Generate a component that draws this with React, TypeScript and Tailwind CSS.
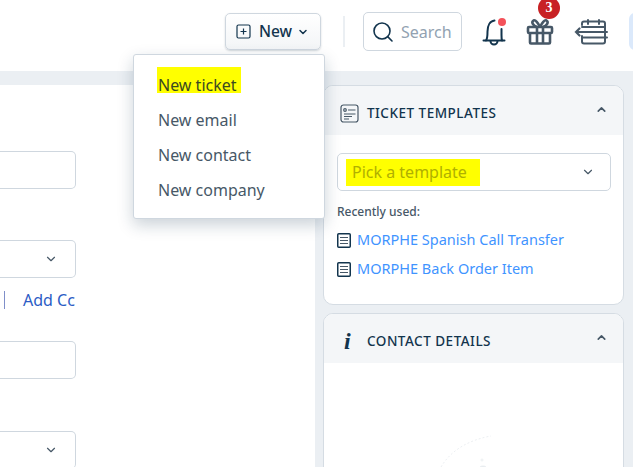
import { ChevronDown, ChevronUp, Search } from 'lucide-react';

const font = { fontFamily: '"Noto Sans", sans-serif' };

function GiftIcon() {
  return (
    <svg width="28" height="28" viewBox="0 0 28 28" fill="none" stroke="#475867" strokeWidth="2.6" strokeLinejoin="round">
      <rect x="2" y="9" width="24" height="6" rx="1" />
      <path d="M4 15v9.500a1 1 0 0 0 1 1h18a1 1 0 0 0 1-1V15" />
      <path d="M11 9v16.500M17 9v16.500" />
      <path d="M14 9C12 5 9.500 1.500 7.500 2.500 5 4 7 8 11 9M14 9c2-4 4.500-7.500 6.500-6.500C23 4 21 8 17 9" />
    </svg>
  );
}

function BellIcon() {
  return (
    <svg width="26" height="28" viewBox="0 0 26 28" fill="none" stroke="#12344d" strokeWidth="2" strokeLinecap="round">
      <path d="M2.500 22.500h21" />
      <path d="M5 22.500c1.500-2 1.500-4 1.500-9 0-6 2.500-10.500 7-11" />
      <path d="M20.500 11v6c0 2.500 0 4 .5 5.500" />
      <path d="M9.500 23a3.500 3.500 0 0 0 7 0" />
    </svg>
  );
}

function CalendarIcon() {
  return (
    <svg width="34" height="26" viewBox="0 0 34 26" fill="none" stroke="#475867" strokeWidth="2" strokeLinecap="round">
      <path d="M8 6V4.500a2 2 0 0 1 2-2h19a2 2 0 0 1 2 2v18a2 2 0 0 1-2 2H10a2 2 0 0 1-2-2V17" />
      <path d="M14 1v4M25 1v4M8 8h23" />
      <path d="M2 13h12M5.500 9.500 2 13l3.500 3.500" strokeWidth="2.200" />
      <path d="M14 13h19M8 18.500h25" />
    </svg>
  );
}

function TemplateIcon() {
  return (
    <svg width="19" height="19" viewBox="0 0 19 19" fill="none" stroke="#475867" strokeWidth="1.200">
      <rect x="1" y="1" width="17" height="17" rx="2.500" />
      <circle cx="5" cy="6" r="1.300" />
      <path d="M8 6h7.500M4 10h11.500M4 12.500h8M4 15h5" />
    </svg>
  );
}

function DocIcon() {
  return (
    <svg width="14" height="15" viewBox="0 0 14 15" fill="none" stroke="#12344d" className="shrink-0">
      <rect x="0.750" y="0.750" width="12.500" height="13.500" rx="1" strokeWidth="1.500" />
      <path d="M3 4.500h8M3 7.500h8M3 10.500h8" stroke="#475867" strokeWidth="1" />
    </svg>
  );
}

function FieldBox({ select }: { select?: boolean }) {
  return (
    <div className="flex h-[38px] w-[76px] items-center justify-end rounded-r-[5px] border border-l-0 border-[#cfd7df] bg-white pr-[17px]">
      {select && <ChevronDown size={14} className="text-[#475867]" />}
    </div>
  );
}

export default function App() {
  return (
    <div className="relative flex h-[467px] w-[633px] flex-col overflow-hidden bg-[#ebeff3] text-[#12344d]" style={font}>
      {/* Top bar */}
      <header className="flex h-[71px] shrink-0 items-center overflow-hidden bg-white pb-[8px] pl-[225px]">
        <button className="flex h-[37px] w-[96px] shrink-0 items-center rounded-[5px] border border-[#cfd7df] bg-gradient-to-b from-white to-[#f3f5f7] pl-[10px] shadow-[0_1px_2px_rgba(24,50,71,0.2)]">
          <svg width="15" height="15" viewBox="0 0 15 15" fill="none" stroke="#12344d" strokeWidth="1.200">
            <rect x="1" y="1" width="13" height="13" rx="1.500" />
            <path d="M7.500 4.500v6M4.500 7.500h6" />
          </svg>
          <span className="ml-[8px] text-[15.500px] font-medium">New</span>
          <ChevronDown size={12} strokeWidth={3} className="ml-[5px]" />
        </button>
        <div className="ml-[22px] h-[31px] w-[2px] shrink-0 bg-[#ebeff3]" />
        <div className="ml-[18px] flex h-[39px] w-[99px] shrink-0 items-center rounded-[5px] border border-[#cfd7df] bg-white pl-[7px]">
          <Search size={24} strokeWidth={1.600} className="shrink-0 text-[#12344d]" />
          <span className="ml-[6px] text-[16px] text-[#92a2b1]">Search</span>
        </div>
        <div className="relative ml-[19px] shrink-0">
          <BellIcon />
          <span className="absolute right-[1px] top-0 h-[8px] w-[8px] rounded-full bg-[#f4525a]" />
        </div>
        <div className="relative ml-[19px] shrink-0">
          <GiftIcon />
          <span className="absolute left-[12px] top-[-21px] flex h-[22px] w-[22px] items-center justify-center rounded-full bg-[#c82124] text-[14px] font-bold text-white" style={{ fontFamily: '"Liberation Serif", serif' }}>
            3
          </span>
        </div>
        <div className="ml-[20px] shrink-0">
          <CalendarIcon />
        </div>
        <div className="ml-[21px] h-[37px] w-[20px] shrink-0 rounded-l-[6px] bg-[#dbe9fb]" />
      </header>

      {/* Page body */}
      <div className="mt-[14px] flex min-h-0 flex-1">
        <section className="w-[315px] shrink-0 bg-white pt-[66px]">
          <FieldBox />
          <div className="mt-[51px]">
            <FieldBox select />
          </div>
          <div className="mt-[11px] flex h-[22px] w-[76px] items-center overflow-hidden whitespace-nowrap pl-[4px] text-[16px] text-[#2c5cc5]">
            <span className="h-[18px] w-[1px] shrink-0 bg-[#7f8fc9]" />
            <span className="ml-[18px] shrink-0">Add Cc</span>
          </div>
          <div className="mt-[30px]">
            <FieldBox />
          </div>
          <div className="mt-[52px]">
            <FieldBox select />
          </div>
        </section>

        <aside className="ml-2 w-[301px] shrink-0">
          <div className="h-[220px] overflow-hidden rounded-[10px] border border-[#d5dce3] bg-white">
            <div className="flex h-[49px] items-center bg-[#f4f6f8] pl-[16px] pr-[15px] pt-[5px]">
              <TemplateIcon />
              <h3 className="ml-[8px] flex-1 text-[13.500px] font-medium tracking-[0.5px]">TICKET TEMPLATES</h3>
              <ChevronUp size={13} strokeWidth={3} className="-translate-y-[4px] text-[#475867]" />
            </div>
            <div className="pl-[13px] pr-[12px] pt-[18px]">
              <div className="flex h-[38px] items-center justify-between rounded-[5px] border border-[#cfd7df] pl-[8px] pr-[15px]">
                <span className="flex h-[27px] w-[134px] items-center bg-[#ffff00] pl-[6px] text-[16px] text-[#b0b000]">Pick a template</span>
                <ChevronDown size={14} className="text-[#475867]" />
              </div>
              <p className="mt-[12px] text-[12px] font-medium text-[#475867]">Recently used:</p>
              <ul className="mt-[8px] flex flex-col gap-[7px] text-[14.500px] text-[#3f94ff]">
                <li className="flex h-[22px] items-center gap-[6px]"><DocIcon />MORPHE Spanish Call Transfer</li>
                <li className="flex h-[22px] items-center gap-[6px]"><DocIcon />MORPHE Back Order Item</li>
              </ul>
            </div>
          </div>

          <div className="mt-[8px] h-[200px] overflow-hidden rounded-t-[10px] border border-[#d5dce3] bg-white">
            <div className="flex h-[49px] items-center bg-[#f4f6f8] pl-[20px] pr-[15px] pt-[5px]">
              <span className="w-[18px] text-[24px] font-bold italic leading-none" style={{ fontFamily: '"Liberation Serif", serif' }}>i</span>
              <h3 className="ml-[5px] flex-1 text-[13.500px] font-medium tracking-[0.5px]">CONTACT DETAILS</h3>
              <ChevronUp size={13} strokeWidth={3} className="-translate-y-[4px] text-[#475867]" />
            </div>
            <div className="flex justify-center pt-[71px]">
              <svg width="70" height="34" viewBox="0 0 70 34" fill="none" stroke="#eceff2" strokeWidth="1" strokeDasharray="2 2">
                <path d="M2 33C12 16 30 6 52 2" />
                <circle cx="43" cy="26" r="1" strokeDasharray="none" />
                <ellipse cx="44" cy="33" rx="3" ry="1" fill="#e4e9ee" strokeDasharray="none" />
              </svg>
            </div>
          </div>
        </aside>
      </div>

      {/* Open dropdown */}
      <div className="absolute left-[133px] top-[54px] h-[165px] w-[192px] rounded-[3px] border border-[#cfd7df] bg-white pl-[24px] pt-[12px] text-[16px] text-[#475867] shadow-[0_6px_16px_rgba(18,52,77,0.22)]">
        <ul className="flex flex-col">
          <li className="flex h-[35px] items-start"><span className="-ml-[1px] block h-[26px] bg-[#ffff00] pl-[1px] pr-[4px] pt-[10px] leading-[16px] text-[#3a4a20]">New ticket</span></li>
          <li className="flex h-[35px] items-center">New email</li>
          <li className="flex h-[35px] items-center">New contact</li>
          <li className="flex h-[35px] items-center">New company</li>
        </ul>
      </div>
    </div>
  );
}
